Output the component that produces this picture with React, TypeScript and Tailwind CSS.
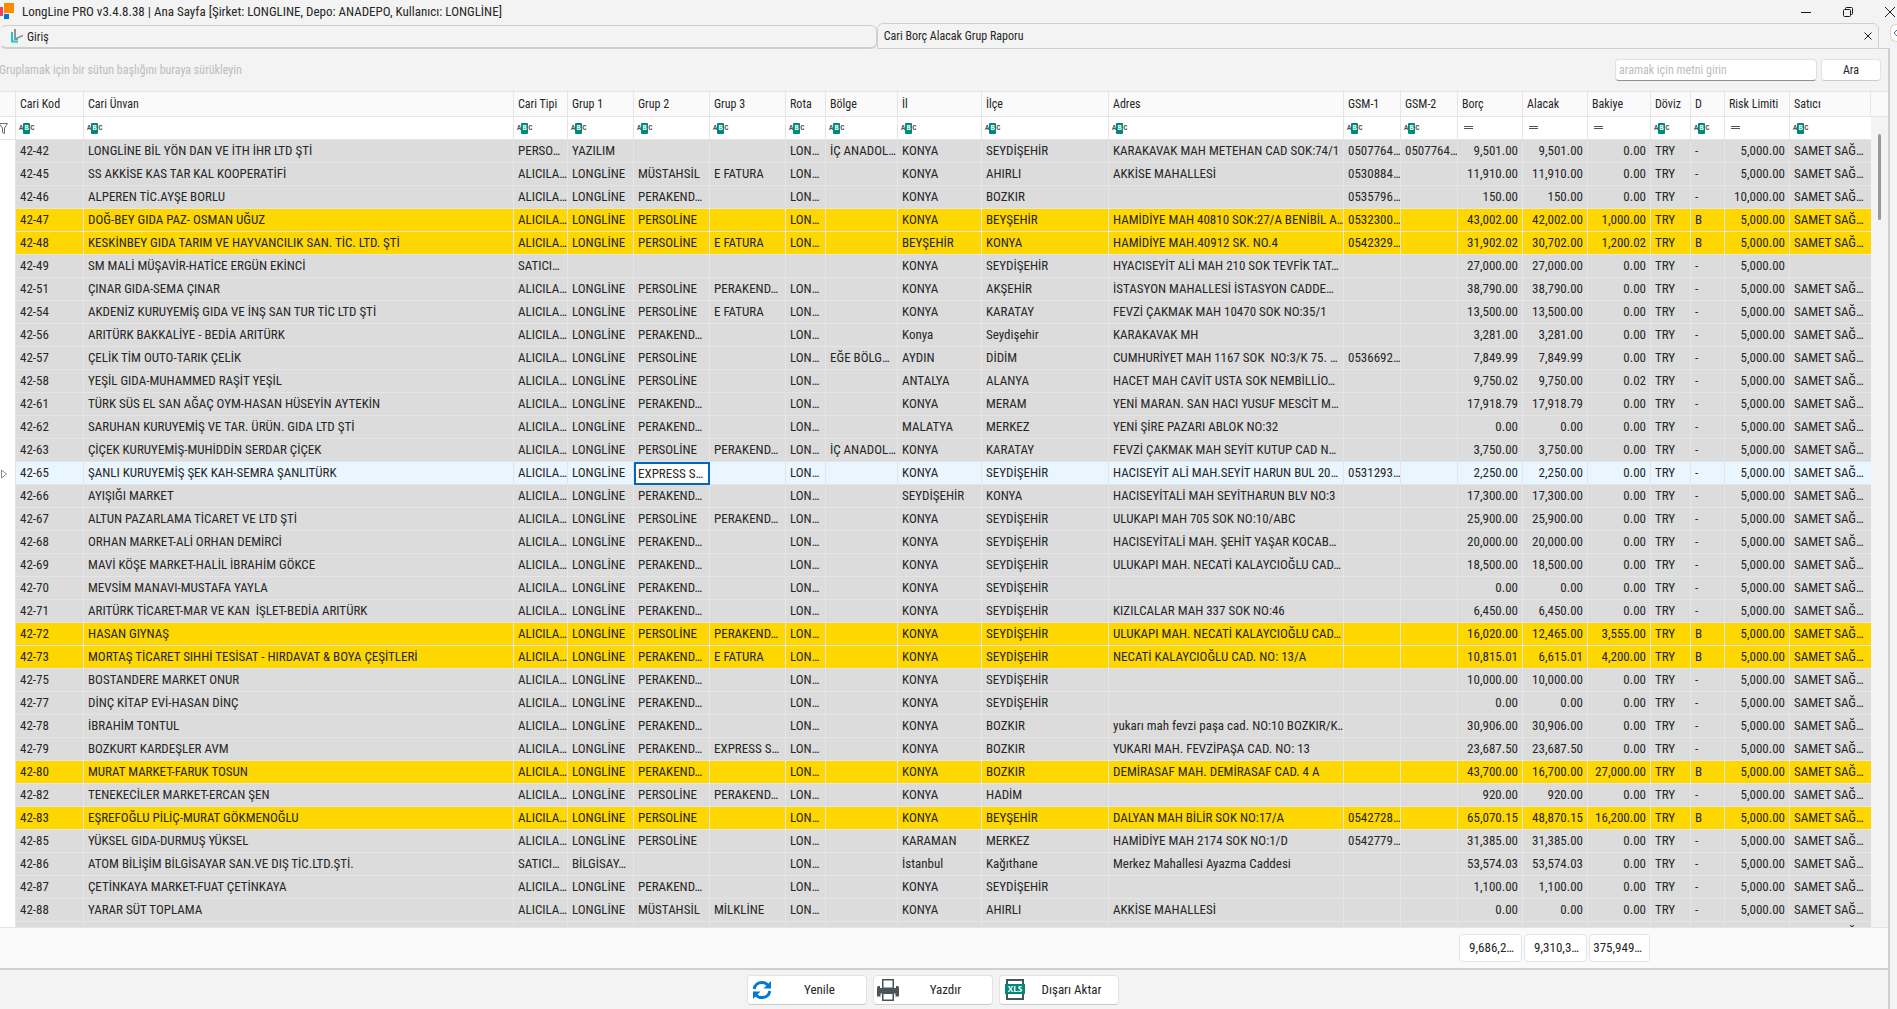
import { useState } from 'react';
import { clsx } from 'clsx';

type Filter = 'text' | 'number';

interface Column {
  title: string;
  width: string;
  filter: Filter;
}

const columns: Column[] = [
  { title: 'Cari Kod', width: 'w-[68px]', filter: 'text' },
  { title: 'Cari Ünvan', width: 'w-auto', filter: 'text' },
  { title: 'Cari Tipi', width: 'w-[54px]', filter: 'text' },
  { title: 'Grup 1', width: 'w-[66px]', filter: 'text' },
  { title: 'Grup 2', width: 'w-[76px]', filter: 'text' },
  { title: 'Grup 3', width: 'w-[76px]', filter: 'text' },
  { title: 'Rota', width: 'w-[40px]', filter: 'text' },
  { title: 'Bölge', width: 'w-[72px]', filter: 'text' },
  { title: 'İl', width: 'w-[84px]', filter: 'text' },
  { title: 'İlçe', width: 'w-[127px]', filter: 'text' },
  { title: 'Adres', width: 'w-[235px]', filter: 'text' },
  { title: 'GSM-1', width: 'w-[57px]', filter: 'text' },
  { title: 'GSM-2', width: 'w-[57px]', filter: 'text' },
  { title: 'Borç', width: 'w-[65px]', filter: 'number' },
  { title: 'Alacak', width: 'w-[65px]', filter: 'number' },
  { title: 'Bakiye', width: 'w-[63px]', filter: 'number' },
  { title: 'Döviz', width: 'w-[40px]', filter: 'text' },
  { title: 'D', width: 'w-[34px]', filter: 'text' },
  { title: 'Risk Limiti', width: 'w-[65px]', filter: 'number' },
  { title: 'Satıcı', width: 'w-[81px]', filter: 'text' },
];

const AL = 'ALICILA…';
const LL = 'LONGLİNE';
const PL = 'PERSOLİNE';
const PK = 'PERAKEND…';
const EF = 'E FATURA';
const RT = 'LON…';
const SS = 'SAMET SAĞ…';
const SY = 'SEYDİŞEHİR';

const rows: string[][] = [
  ['42-42', 'LONGLİNE BİL YÖN DAN VE İTH İHR LTD ŞTİ', 'PERSO…', 'YAZILIM', '', '', RT, 'İÇ ANADOL…', 'KONYA', SY, 'KARAKAVAK MAH METEHAN CAD SOK:74/1', '0507764…', '0507764…', '9,501.00', '9,501.00', '0.00', 'TRY', '-', '5,000.00', SS],
  ['42-45', 'SS AKKİSE KAS TAR KAL KOOPERATİFİ', AL, LL, 'MÜSTAHSİL', EF, RT, '', 'KONYA', 'AHIRLI', 'AKKİSE MAHALLESİ', '0530884…', '', '11,910.00', '11,910.00', '0.00', 'TRY', '-', '5,000.00', SS],
  ['42-46', 'ALPEREN TİC.AYŞE BORLU', AL, LL, PK, '', RT, '', 'KONYA', 'BOZKIR', '', '0535796…', '', '150.00', '150.00', '0.00', 'TRY', '-', '10,000.00', SS],
  ['42-47', 'DOĞ-BEY GIDA PAZ- OSMAN UĞUZ', AL, LL, PL, '', RT, '', 'KONYA', 'BEYŞEHİR', 'HAMİDİYE MAH 40810 SOK:27/A BENİBİL A…', '0532300…', '', '43,002.00', '42,002.00', '1,000.00', 'TRY', 'B', '5,000.00', SS],
  ['42-48', 'KESKİNBEY GIDA TARIM VE HAYVANCILIK SAN. TİC. LTD. ŞTİ', AL, LL, PL, EF, RT, '', 'BEYŞEHİR', 'KONYA', 'HAMİDİYE MAH.40912 SK. NO.4', '0542329…', '', '31,902.02', '30,702.00', '1,200.02', 'TRY', 'B', '5,000.00', SS],
  ['42-49', 'SM MALİ MÜŞAVİR-HATİCE ERGÜN EKİNCİ', 'SATICI…', '', '', '', '', '', 'KONYA', SY, 'HYACISEYİT ALİ MAH 210 SOK TEVFİK TAT…', '', '', '27,000.00', '27,000.00', '0.00', 'TRY', '-', '5,000.00', ''],
  ['42-51', 'ÇINAR GIDA-SEMA ÇINAR', AL, LL, PL, PK, RT, '', 'KONYA', 'AKŞEHİR', 'İSTASYON MAHALLESİ İSTASYON CADDE…', '', '', '38,790.00', '38,790.00', '0.00', 'TRY', '-', '5,000.00', SS],
  ['42-54', 'AKDENİZ KURUYEMİŞ GIDA VE İNŞ SAN TUR TİC LTD ŞTİ', AL, LL, PL, EF, RT, '', 'KONYA', 'KARATAY', 'FEVZİ ÇAKMAK MAH 10470 SOK NO:35/1', '', '', '13,500.00', '13,500.00', '0.00', 'TRY', '-', '5,000.00', SS],
  ['42-56', 'ARITÜRK BAKKALİYE - BEDİA ARITÜRK', AL, LL, PK, '', RT, '', 'Konya', 'Seydişehir', 'KARAKAVAK MH', '', '', '3,281.00', '3,281.00', '0.00', 'TRY', '-', '5,000.00', SS],
  ['42-57', 'ÇELİK TİM OUTO-TARIK ÇELİK', AL, LL, PL, '', RT, 'EĞE BÖLG…', 'AYDIN', 'DİDİM', 'CUMHURİYET MAH 1167 SOK  NO:3/K 75. …', '0536692…', '', '7,849.99', '7,849.99', '0.00', 'TRY', '-', '5,000.00', SS],
  ['42-58', 'YEŞİL GIDA-MUHAMMED RAŞİT YEŞİL', AL, LL, PL, '', RT, '', 'ANTALYA', 'ALANYA', 'HACET MAH CAVİT USTA SOK NEMBİLLİO…', '', '', '9,750.02', '9,750.00', '0.02', 'TRY', '-', '5,000.00', SS],
  ['42-61', 'TÜRK SÜS EL SAN AĞAÇ OYM-HASAN HÜSEYİN AYTEKİN', AL, LL, PK, '', RT, '', 'KONYA', 'MERAM', 'YENİ MARAN. SAN HACI YUSUF MESCİT M…', '', '', '17,918.79', '17,918.79', '0.00', 'TRY', '-', '5,000.00', SS],
  ['42-62', 'SARUHAN KURUYEMİŞ VE TAR. ÜRÜN. GIDA LTD ŞTİ', AL, LL, PK, '', RT, '', 'MALATYA', 'MERKEZ', 'YENİ ŞİRE PAZARI ABLOK NO:32', '', '', '0.00', '0.00', '0.00', 'TRY', '-', '5,000.00', SS],
  ['42-63', 'ÇİÇEK KURUYEMİŞ-MUHİDDİN SERDAR ÇİÇEK', AL, LL, PL, PK, RT, 'İÇ ANADOL…', 'KONYA', 'KARATAY', 'FEVZİ ÇAKMAK MAH SEYİT KUTUP CAD N…', '', '', '3,750.00', '3,750.00', '0.00', 'TRY', '-', '5,000.00', SS],
  ['42-65', 'ŞANLI KURUYEMİŞ ŞEK KAH-SEMRA ŞANLITÜRK', AL, LL, 'EXPRESS S…', '', RT, '', 'KONYA', SY, 'HACISEYİT ALİ MAH.SEYİT HARUN BUL 20…', '0531293…', '', '2,250.00', '2,250.00', '0.00', 'TRY', '-', '5,000.00', SS],
  ['42-66', 'AYIŞIĞI MARKET', AL, LL, PK, '', RT, '', SY, 'KONYA', 'HACISEYİTALİ MAH SEYİTHARUN BLV NO:3', '', '', '17,300.00', '17,300.00', '0.00', 'TRY', '-', '5,000.00', SS],
  ['42-67', 'ALTUN PAZARLAMA TİCARET VE LTD ŞTİ', AL, LL, PL, PK, RT, '', 'KONYA', SY, 'ULUKAPI MAH 705 SOK NO:10/ABC', '', '', '25,900.00', '25,900.00', '0.00', 'TRY', '-', '5,000.00', SS],
  ['42-68', 'ORHAN MARKET-ALİ ORHAN DEMİRCİ', AL, LL, PK, '', RT, '', 'KONYA', SY, 'HACISEYİTALİ MAH. ŞEHİT YAŞAR KOCAB…', '', '', '20,000.00', '20,000.00', '0.00', 'TRY', '-', '5,000.00', SS],
  ['42-69', 'MAVİ KÖŞE MARKET-HALİL İBRAHİM GÖKCE', AL, LL, PK, '', RT, '', 'KONYA', SY, 'ULUKAPI MAH. NECATİ KALAYCIOĞLU CAD…', '', '', '18,500.00', '18,500.00', '0.00', 'TRY', '-', '5,000.00', SS],
  ['42-70', 'MEVSİM MANAVI-MUSTAFA YAYLA', AL, LL, PK, '', RT, '', 'KONYA', SY, '', '', '', '0.00', '0.00', '0.00', 'TRY', '-', '5,000.00', SS],
  ['42-71', 'ARITÜRK TİCARET-MAR VE KAN  İŞLET-BEDİA ARITÜRK', AL, LL, PK, '', RT, '', 'KONYA', SY, 'KIZILCALAR MAH 337 SOK NO:46', '', '', '6,450.00', '6,450.00', '0.00', 'TRY', '-', '5,000.00', SS],
  ['42-72', 'HASAN GIYNAŞ', AL, LL, PL, PK, RT, '', 'KONYA', SY, 'ULUKAPI MAH. NECATİ KALAYCIOĞLU CAD…', '', '', '16,020.00', '12,465.00', '3,555.00', 'TRY', 'B', '5,000.00', SS],
  ['42-73', 'MORTAŞ TİCARET SIHHİ TESİSAT - HIRDAVAT & BOYA ÇEŞİTLERİ', AL, LL, PK, EF, RT, '', 'KONYA', SY, 'NECATİ KALAYCIOĞLU CAD. NO: 13/A', '', '', '10,815.01', '6,615.01', '4,200.00', 'TRY', 'B', '5,000.00', SS],
  ['42-75', 'BOSTANDERE MARKET ONUR', AL, LL, PK, '', RT, '', 'KONYA', SY, '', '', '', '10,000.00', '10,000.00', '0.00', 'TRY', '-', '5,000.00', SS],
  ['42-77', 'DİNÇ KİTAP EVİ-HASAN DİNÇ', AL, LL, PK, '', RT, '', 'KONYA', SY, '', '', '', '0.00', '0.00', '0.00', 'TRY', '-', '5,000.00', SS],
  ['42-78', 'İBRAHİM TONTUL', AL, LL, PK, '', RT, '', 'KONYA', 'BOZKIR', 'yukarı mah fevzi paşa cad. NO:10 BOZKIR/K…', '', '', '30,906.00', '30,906.00', '0.00', 'TRY', '-', '5,000.00', SS],
  ['42-79', 'BOZKURT KARDEŞLER AVM', AL, LL, PK, 'EXPRESS S…', RT, '', 'KONYA', 'BOZKIR', 'YUKARI MAH. FEVZİPAŞA CAD. NO: 13', '', '', '23,687.50', '23,687.50', '0.00', 'TRY', '-', '5,000.00', SS],
  ['42-80', 'MURAT MARKET-FARUK TOSUN', AL, LL, PK, '', RT, '', 'KONYA', 'BOZKIR', 'DEMİRASAF MAH. DEMİRASAF CAD. 4 A', '', '', '43,700.00', '16,700.00', '27,000.00', 'TRY', 'B', '5,000.00', SS],
  ['42-82', 'TENEKECİLER MARKET-ERCAN ŞEN', AL, LL, PL, PK, RT, '', 'KONYA', 'HADİM', '', '', '', '920.00', '920.00', '0.00', 'TRY', '-', '5,000.00', SS],
  ['42-83', 'EŞREFOĞLU PİLİÇ-MURAT GÖKMENOĞLU', AL, LL, PL, '', RT, '', 'KONYA', 'BEYŞEHİR', 'DALYAN MAH BİLİR SOK NO:17/A', '0542728…', '', '65,070.15', '48,870.15', '16,200.00', 'TRY', 'B', '5,000.00', SS],
  ['42-85', 'YÜKSEL GIDA-DURMUŞ YÜKSEL', AL, LL, PL, '', RT, '', 'KARAMAN', 'MERKEZ', 'HAMİDİYE MAH 2174 SOK NO:1/D', '0542779…', '', '31,385.00', '31,385.00', '0.00', 'TRY', '-', '5,000.00', SS],
  ['42-86', 'ATOM BİLİŞİM BİLGİSAYAR SAN.VE DIŞ TİC.LTD.ŞTİ.', 'SATICI…', 'BİLGİSAY…', '', '', RT, '', 'İstanbul', 'Kağıthane', 'Merkez Mahallesi Ayazma Caddesi', '', '', '53,574.03', '53,574.03', '0.00', 'TRY', '-', '5,000.00', SS],
  ['42-87', 'ÇETİNKAYA MARKET-FUAT ÇETİNKAYA', AL, LL, PK, '', RT, '', 'KONYA', SY, '', '', '', '1,100.00', '1,100.00', '0.00', 'TRY', '-', '5,000.00', SS],
  ['42-88', 'YARAR SÜT TOPLAMA', AL, LL, 'MÜSTAHSİL', 'MİLKLİNE', RT, '', 'KONYA', 'AHIRLI', 'AKKİSE MAHALLESİ', '', '', '0.00', '0.00', '0.00', 'TRY', '-', '5,000.00', SS],
  ['', '', '', '', '', '', '', '', '', '', '', '', '', '', '', '', '', '', '', SS],
];

const GROUP2_COL = 4;
const DEBT_COL = 17;

function AbcIcon() {
  return (
    <span className="flex h-[11px] items-center font-['Liberation_Mono'] text-[7px] leading-[11px] font-bold text-[#4d4d4d]">
      <span>A</span>
      <span className="flex h-[11px] w-[7px] justify-center rounded-[1px] bg-[#00897b] text-white">B</span>
      <span>C</span>
    </span>
  );
}

function EqualsIcon() {
  return (
    <svg width="9" height="4" viewBox="0 0 9 4" className="ml-[3px]" fill="#4d5558">
      <rect width="9" height="1" />
      <rect y="2" width="9" height="1" />
    </svg>
  );
}

function RefreshIcon() {
  return (
    <svg width="22" height="22" viewBox="0 0 22 22" fill="none" stroke="#0078d7" strokeWidth="3">
      <path d="M3.2 10C3.8 5.8 7 3.4 11 3.4c2.500 0 4.600 1 6 2.800" />
      <path d="M18.800 12c-.6 4.200-3.800 6.600-7.800 6.600-2.500 0-4.600-1-6-2.800" />
      <path d="M20 2v7.500h-7.500z" fill="#0078d7" stroke="none" />
      <path d="M2 20v-7.500h7.500z" fill="#0078d7" stroke="none" />
    </svg>
  );
}

function PrinterIcon() {
  return (
    <svg width="22" height="22" viewBox="0 0 22 22" fill="#47555a">
      <path d="M0 8.500Q0 7 1.500 7H3v3h16V7h1.500Q22 7 22 8.500V17.500H18.500V14H3.500v3.500H0z" />
      <path d="M3 9h16v5.500H3z" />
      <rect x="5.750" y=".75" width="10.500" height="8.500" fill="#fff" stroke="#47555a" strokeWidth="1.500" />
      <rect x="5.750" y="14.250" width="10.500" height="7" fill="#fff" stroke="#47555a" strokeWidth="1.500" />
    </svg>
  );
}

function XlsIcon() {
  return (
    <svg width="22" height="22" viewBox="0 0 22 22">
      <rect x="4" y="1" width="16" height="19" fill="#fff" stroke="#47555a" strokeWidth="2" />
      <rect x="2" y="5" width="20" height="10" fill="#00897b" />
      <text x="12" y="13" textAnchor="middle" fontFamily="Open Sans, sans-serif" fontSize="8" fontWeight="700" fill="#fff">XLS</text>
    </svg>
  );
}

const actions = [
  { label: 'Yenile', icon: RefreshIcon },
  { label: 'Yazdır', icon: PrinterIcon },
  { label: 'Dışarı Aktar', icon: XlsIcon },
];

function TitleBar() {
  return (
    <header className="flex h-[23px] shrink-0 items-center">
      <svg width="15" height="23" viewBox="0 0 15 23">
        <rect y="7" width="3" height="9" fill="#e74856" />
        <rect x="4" y="3" width="10" height="10" fill="#ff8c00" />
        <rect x="4" y="14" width="5" height="5" fill="#0078d7" />
      </svg>
      <h1 className="ml-[7px]">
        LongLine PRO v3.4.8.38 | Ana Sayfa [Şirket: LONGLINE, Depo: ANADEPO, Kullanıcı: LONGLİNE]
      </h1>
      <div className="ml-auto flex items-center gap-8 pt-px pr-[2px]">
        <button aria-label="Küçült">
          <svg width="10" height="10" viewBox="0 0 10 10" stroke="#1a1a1a"><path d="M0 5.500h10" /></svg>
        </button>
        <button aria-label="Önceki boyut">
          <svg width="10" height="10" viewBox="0 0 10 10" fill="none" stroke="#1a1a1a">
            <rect x=".5" y="2.500" width="7" height="7" rx="1" />
            <path d="M2.500 2.500V1.500q0-1 1-1h5q1 0 1 1v5q0 1-1 1h-1" />
          </svg>
        </button>
        <button aria-label="Kapat">
          <svg width="10" height="10" viewBox="0 0 10 10" stroke="#1a1a1a"><path d="M0 0l10 10M10 0L0 10" /></svg>
        </button>
      </div>
    </header>
  );
}

function TabStrip() {
  return (
    <nav className="flex h-[26px] shrink-0 items-end text-xs">
      <button className="flex h-6 flex-[7] items-center gap-1 rounded-md border border-b-2 border-[#cfcfcf] border-l-transparent pl-[10px]">
        <svg width="12" height="15" viewBox="0 0 12 15" fill="none">
          <path d="M1 3v9.500h6" stroke="#1fc3d3" strokeWidth="2" />
          <path d="M4 0v10h3" stroke="#6f7478" strokeWidth="1.500" />
          <path d="M4 10l8-3.500" stroke="#8a8f92" strokeWidth="1.500" />
          <path d="M1 14h6" stroke="#9be3ea" />
        </svg>
        Giriş
      </button>
      <div className="flex h-full min-w-0 flex-[8] items-center rounded-t-md border border-[#cfcfcf] pr-[6px] pl-[6px]">
        <button className="flex-1 text-left">Cari Borç Alacak Grup Raporu</button>
        <button aria-label="Sekmeyi kapat">
          <svg width="8" height="8" viewBox="0 0 8 8" stroke="#1a1a1a"><path d="M.5.5l7 7M7.500.5l-7 7" /></svg>
        </button>
      </div>
      <div className="w-[11px] self-stretch border-b border-[#cfcfcf]" />
      <button aria-label="Sekmeleri kaydır" className="mb-[7px] h-[18px] w-[7px] rounded-l-md border border-r-0 border-[#d6d6d6] bg-white">
        <svg width="5" height="8" viewBox="0 0 5 8" fill="none" stroke="#2f6fb5" className="ml-px"><path d="M5 1L2 4l3 3" /></svg>
      </button>
    </nav>
  );
}

function SearchPanel() {
  return (
    <div className="flex h-[42px] shrink-0 items-center pr-[7px] text-xs">
      <p className="-ml-px flex-1 text-[#bdbdbd]">Gruplamak için bir sütun başlığını buraya sürükleyin</p>
      <input
        aria-label="Ara"
        placeholder="aramak için metni girin"
        className="h-[22px] w-[202px] rounded border border-b-[#8f8f8f] border-[#e0e0e0] bg-white px-[3px] placeholder:text-[#bdbdbd]"
      />
      <button className="ml-1 h-[22px] w-[60px] rounded border border-b-[#cccccc] border-[#e3e3e3] bg-white">Ara</button>
    </div>
  );
}

function Grid() {
  const [focused, setFocused] = useState('42-65');

  return (
    <div className="flex min-h-0 flex-1 overflow-hidden border-y border-[#e5e5e5]">
      <table className="w-full flex-1 table-fixed border-separate border-spacing-0 self-start">
        <thead>
          <tr className="h-[25px] bg-[#fafafa] text-xs">
            <th aria-label="Satır" className="w-4 border-r border-b border-[#e5e5e5] p-0" />
            {columns.map((col) => (
              <th key={col.title} scope="col" className={clsx('border-r border-b border-[#e5e5e5] px-1 py-0 text-left font-normal whitespace-pre', col.width)}>
                {col.title}
              </th>
            ))}
          </tr>
          <tr className="h-[23px] bg-white">
            <td className="border-r border-b border-[#e5e5e5] p-0">
              <svg width="8" height="11" viewBox="0 0 8 11" fill="none" stroke="#6b6b6b"><path d="M-3 .5h10.500L4.500 5v5.500l-2-1V5L-1 .5" /></svg>
            </td>
            {columns.map((col, i) => (
              <td key={col.title} className={clsx('border-b border-[#e5e5e5] py-0 pr-1 pl-[3px]', i < columns.length - 1 && 'border-r')}>
                <button aria-label={`${col.title} filtresi`} className="block">
                  {col.filter === 'text' ? <AbcIcon /> : <EqualsIcon />}
                </button>
              </td>
            ))}
          </tr>
        </thead>
        <tbody>
          {rows.map((row) => {
            const isFocused = row[0] === focused;
            return (
              <tr
                key={row[0]}
                onClick={() => setFocused(row[0])}
                className={clsx('h-[23px]', isFocused ? 'bg-[#eaf6ff]' : row[DEBT_COL] === 'B' ? 'bg-[#ffd700]' : 'bg-[#dcdcdc]')}
              >
                <td className="border-r border-[#e5e5e5] bg-white p-0">
                  {isFocused && (
                    <svg width="8" height="10" viewBox="0 0 8 10" fill="none" stroke="#8a8a8a"><path d="M1.500 1v8L6.500 5z" /></svg>
                  )}
                </td>
                {row.map((cell, i) => (
                  <td
                    key={i}
                    className={clsx(
                      'overflow-hidden py-0 whitespace-pre',
                      columns[i].filter === 'number' ? 'pr-1 text-right' : 'text-left',
                      isFocused && i === GROUP2_COL
                        ? 'border-2 border-[#0067c0] bg-white pl-[2px]'
                        : 'border-b border-[#e5e5e5] pl-1',
                      i < row.length - 1 && !(isFocused && i === GROUP2_COL) && 'border-r',
                    )}
                  >
                    {cell}
                  </td>
                ))}
              </tr>
            );
          })}
        </tbody>
      </table>
      <div className="flex w-[17px] shrink-0 flex-col">
        <div className="h-[25px] shrink-0 border-b border-[#e5e5e5] bg-[#fafafa]" />
        <div className="mt-[17px] ml-[7px] h-[86px] w-[3px] rounded-full bg-[#999999]" />
      </div>
    </div>
  );
}

export default function App() {
  return (
    <div className="flex h-screen flex-col overflow-hidden bg-[#f3f3f3] [font-family:'Roboto_Condensed','Liberation_Sans',sans-serif] text-[13px] leading-4 text-[#262626]">
      <TitleBar />
      <TabStrip />
      <main className="mr-[7px] flex min-h-0 flex-1 flex-col border-r-2 border-[#cfcfcf]">
        <SearchPanel />
        <Grid />
        <div className="flex h-10 shrink-0 items-center justify-end gap-[2px] bg-[#fafafa] pr-[238px]">
          {['9,686,2…', '9,310,3…', '375,949…'].map((total) => (
            <output key={total} className="h-7 w-[63px] rounded border border-[#e5e5e5] bg-white pr-[7px] text-right leading-[26px] last:w-[61px]">
              {total}
            </output>
          ))}
        </div>
        <footer className="flex h-[41px] shrink-0 items-center justify-center gap-[6px] border-t-2 border-[#cfcfcf] pr-[22px]">
          {actions.map(({ label, icon: Icon }) => (
            <button key={label} className="flex h-[30px] w-[120px] items-center rounded border border-b-[#cccccc] border-[#e3e3e3] bg-white pl-[3px]">
              <Icon />
              <span className="flex-1 text-center">{label}</span>
            </button>
          ))}
        </footer>
      </main>
    </div>
  );
}
